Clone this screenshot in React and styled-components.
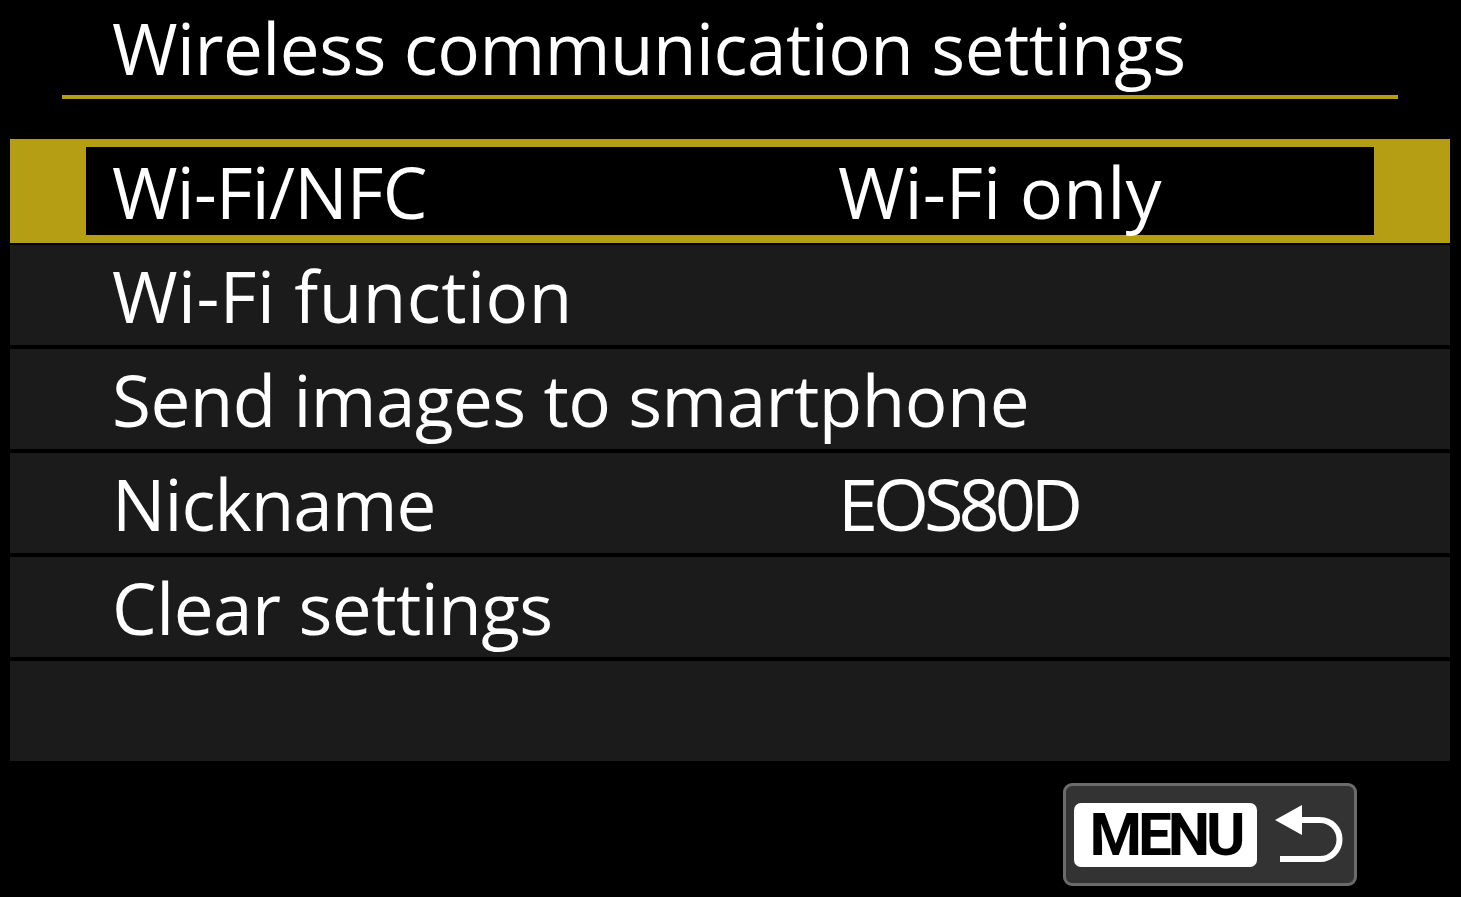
import React from 'react';
import styled, {createGlobalStyle} from 'styled-components';

const GlobalStyle = createGlobalStyle`
    html, body {
        margin: 0;
        padding: 0;
        background: #000;
    }
    body {
        font-family: "Open Sans", "Noto Sans", sans-serif;
        color: #fff;
    }
`;

const Screen = styled.div`
    width: 1461px;
    height: 897px;
    background: #000;
    overflow: hidden;
`;

const Header = styled.div`
    margin-left: 62px;
    width: 1336px;
    height: 95px;
    border-bottom: 4px solid #b59d14;
    box-sizing: content-box;
`;

const Title = styled.h1`
    margin: 0;
    padding-left: 50px;
    font-size: 71px;
    font-weight: 400;
    line-height: 95px;
    letter-spacing: -0.5px;
    white-space: nowrap;
`;

const List = styled.div`
    margin: 40px 0 0 10px;
    width: 1440px;
    display: flex;
    flex-direction: column;
    gap: 4px;
`;

const Row = styled.div`
    height: ${p => (p.$selected ? '104px' : '100px')};
    margin-bottom: ${p => (p.$selected ? '-2px' : '0')};
    box-sizing: border-box;
    background: ${p => (p.$selected ? '#b59d14' : '#1b1b1b')};
    padding: ${p => (p.$selected ? '8px 76px' : '0 0 0 102px')};
    display: flex;
`;

const RowInner = styled.div`
    flex: 1;
    display: flex;
    align-items: center;
    background: ${p => (p.$selected ? '#000' : 'transparent')};
    padding-left: ${p => (p.$selected ? '26px' : '0')};
`;

const Label = styled.span`
    width: 726px;
    font-size: 71px;
    line-height: 1;
    letter-spacing: ${p => p.$tracking}px;
    white-space: nowrap;
`;

const Value = styled.span`
    font-size: 72px;
    line-height: 1;
    letter-spacing: ${p => p.$tracking}px;
    white-space: nowrap;
`;

const Footer = styled.div`
    display: flex;
    justify-content: flex-end;
    padding-right: 104px;
    margin-top: 22px;
`;

const MenuButton = styled.div`
    width: 294px;
    height: 103px;
    box-sizing: border-box;
    border: 3px solid #6b6b6b;
    border-radius: 9px;
    background: #333;
    display: flex;
    align-items: center;
    padding-left: 8px;
    gap: 15px;
`;

const MenuLabel = styled.span`
    width: 183px;
    height: 64px;
    background: #fff;
    border-radius: 7px;
    display: flex;
    align-items: center;
    justify-content: center;
    color: #000;
    font-family: Roboto, "Liberation Sans", sans-serif;
    font-weight: 700;
    font-size: 60px;
    letter-spacing: -4px;
    line-height: 1;
`;

const items = [
    {label: 'Wi-Fi/NFC', value: 'Wi-Fi only', labelTrack: -0.8, valueTrack: 0, selected: true},
    {label: 'Wi-Fi function', labelTrack: 0.5},
    {label: 'Send images to smartphone', labelTrack: -0.55},
    {label: 'Nickname', value: 'EOS80D', labelTrack: -1, valueTrack: -5},
    {label: 'Clear settings', labelTrack: -0.5},
    {label: ''},
];

function ReturnArrow(){
    return (
        <svg width="76" height="64" viewBox="0 0 76 64">
            <polygon points="3,17 30,2 30,32" fill="#fff"/>
            <path d="M29 17 H48 A19.5 19.5 0 0 1 48 56 H8" fill="none" stroke="#fff" strokeWidth="6"/>
        </svg>
    );
}

function App(){
    return (
        <Screen>
            <GlobalStyle/>
            <Header>
                <Title>Wireless communication settings</Title>
            </Header>
            <List>
                {items.map((item, i) =>
                    <Row key={i} $selected={item.selected}>
                        <RowInner $selected={item.selected}>
                            <Label $tracking={item.labelTrack || 0}>{item.label}</Label>
                            {item.value && <Value $tracking={item.valueTrack}>{item.value}</Value>}
                        </RowInner>
                    </Row>
                )}
            </List>
            <Footer>
                <MenuButton>
                    <MenuLabel>MENU</MenuLabel>
                    <ReturnArrow/>
                </MenuButton>
            </Footer>
        </Screen>
    );
}

export default App;
